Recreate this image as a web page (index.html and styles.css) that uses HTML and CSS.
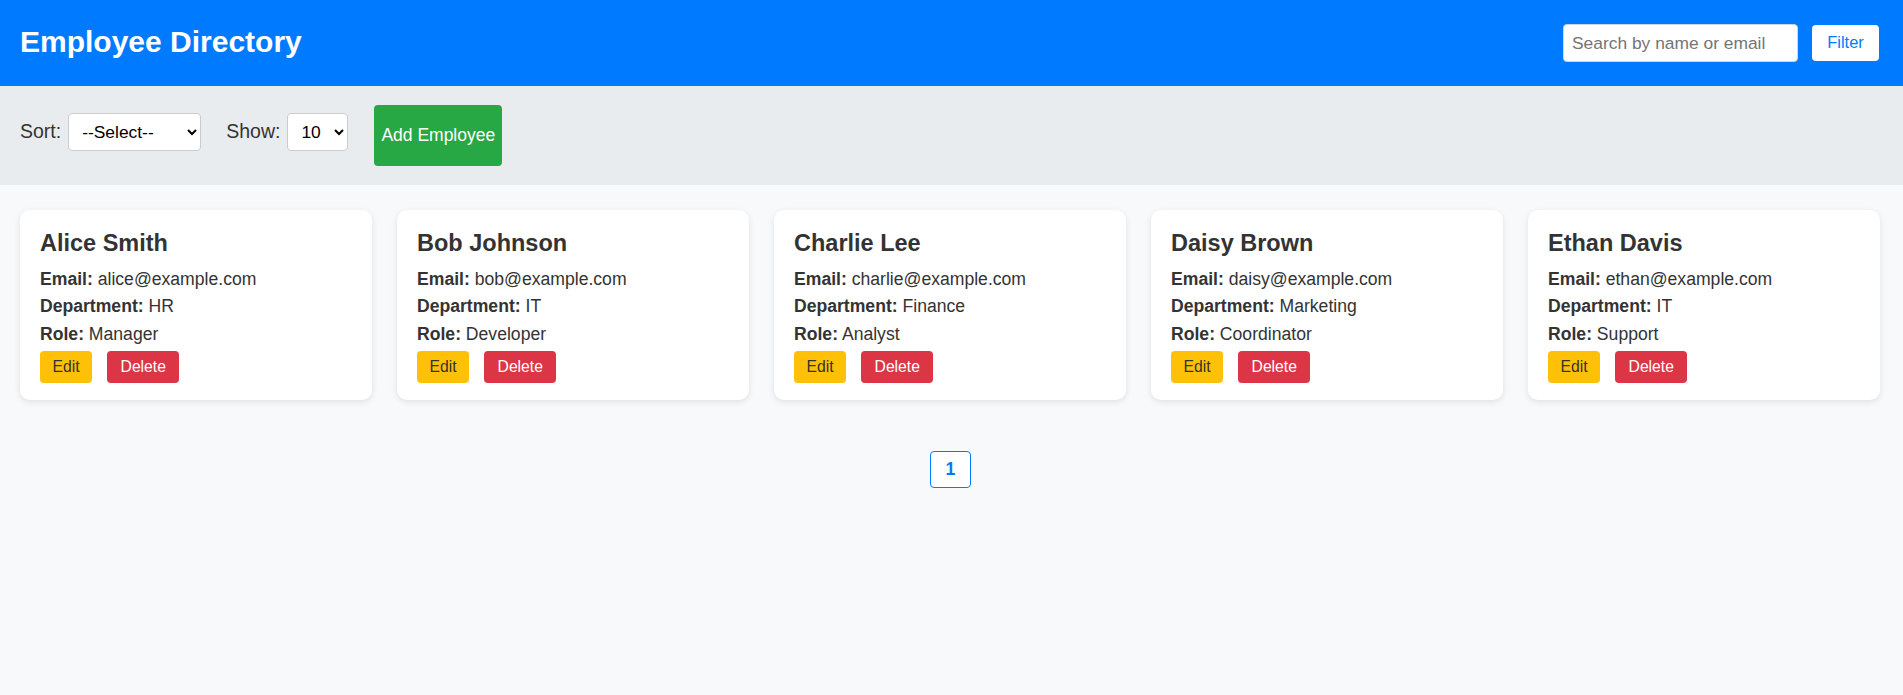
FILE: index.html
```html
<!DOCTYPE html>
<html lang="en">
<head>
<meta charset="utf-8">
<title>Employee Directory</title>
<link rel="stylesheet" href="styles.css">
</head>
<body>
<header class="topbar">
  <h1 class="brand">Employee Directory</h1>
  <div class="search">
    <input class="search-input" type="text" placeholder="Search by name or email">
    <button class="filter-btn">Filter</button>
  </div>
</header>

<section class="toolbar">
  <label class="field">Sort:
    <select class="sel sel-sort"><option>--Select--</option></select>
  </label>
  <label class="field">Show:
    <select class="sel sel-show"><option>10</option></select>
  </label>
  <button class="add-btn">Add Employee</button>
</section>

<main class="content">
  <div class="cards">
    <article class="card">
      <h3 class="name">Alice Smith</h3>
      <p class="row"><b>Email:</b> alice@example.com</p>
      <p class="row"><b>Department:</b> HR</p>
      <p class="row"><b>Role:</b> Manager</p>
      <div class="actions"><button class="btn-edit">Edit</button><button class="btn-del">Delete</button></div>
    </article>
    <article class="card">
      <h3 class="name">Bob Johnson</h3>
      <p class="row"><b>Email:</b> bob@example.com</p>
      <p class="row"><b>Department:</b> IT</p>
      <p class="row"><b>Role:</b> Developer</p>
      <div class="actions"><button class="btn-edit">Edit</button><button class="btn-del">Delete</button></div>
    </article>
    <article class="card">
      <h3 class="name">Charlie Lee</h3>
      <p class="row"><b>Email:</b> charlie@example.com</p>
      <p class="row"><b>Department:</b> Finance</p>
      <p class="row"><b>Role:</b> Analyst</p>
      <div class="actions"><button class="btn-edit">Edit</button><button class="btn-del">Delete</button></div>
    </article>
    <article class="card">
      <h3 class="name">Daisy Brown</h3>
      <p class="row"><b>Email:</b> daisy@example.com</p>
      <p class="row"><b>Department:</b> Marketing</p>
      <p class="row"><b>Role:</b> Coordinator</p>
      <div class="actions"><button class="btn-edit">Edit</button><button class="btn-del">Delete</button></div>
    </article>
    <article class="card">
      <h3 class="name">Ethan Davis</h3>
      <p class="row"><b>Email:</b> ethan@example.com</p>
      <p class="row"><b>Department:</b> IT</p>
      <p class="row"><b>Role:</b> Support</p>
      <div class="actions"><button class="btn-edit">Edit</button><button class="btn-del">Delete</button></div>
    </article>
  </div>
  <nav class="pager"><button class="page-btn">1</button></nav>
</main>
</body>
</html>
```
FILE: styles.css
```css
* { box-sizing: border-box; }
html, body {
  margin: 0;
  padding: 0;
}
body {
  font-family: "Liberation Sans", Arial, sans-serif;
  font-size: 17.6px;
  color: #333;
  background: #f8f9fa;
  min-height: 695px;
}
.topbar {
  background: #007bff;
  height: 86px;
  display: flex;
  align-items: center;
  justify-content: space-between;
  padding: 0 24px 0 20px;
}
.brand {
  margin: 0;
  color: #fff;
  font-size: 30px;
  font-weight: bold;
  line-height: 34px;
  position: relative;
  top: -1px;
}
.search {
  display: flex;
  align-items: center;
  gap: 14px;
}
.search-input {
  width: 235px;
  height: 38px;
  border: 1px solid #ced4da;
  border-radius: 4px;
  padding: 0 8px;
  font-family: "Liberation Sans", Arial, sans-serif;
  font-size: 17.4px;
  color: #333;
  background: #fff;
  outline: none;
}
.search-input::placeholder { color: #757575; }
.filter-btn {
  width: 67px;
  height: 36px;
  border: none;
  border-radius: 4px;
  background: #fff;
  color: #007bff;
  font-family: "Liberation Sans", Arial, sans-serif;
  font-size: 16.5px;
  padding: 0 0 2px;
}
.toolbar {
  background: #e9ecef;
  height: 99px;
  display: flex;
  align-items: center;
  gap: 25px;
  padding: 0 20px;
}
.field {
  display: flex;
  align-items: baseline;
  gap: 7px;
  color: #333;
  font-size: 19.5px;
  line-height: 22px;
  margin-bottom: 7px;
}
.sel {
  height: 38px;
  border: 1px solid #ccc;
  border-radius: 4px;
  background: #fff;
  color: #000;
  font-family: "Liberation Sans", Arial, sans-serif;
  font-size: 17.4px;
  padding: 0 4px 0 9px;
}
.sel-sort { width: 133px; }
.sel-show { width: 61px; }
.add-btn {
  height: 61px;
  padding: 0 7px;
  border: none;
  border-radius: 4px;
  background: #28a745;
  color: #fff;
  font-family: "Liberation Sans", Arial, sans-serif;
  font-size: 17.5px;
  margin-left: 1px;
}
.content {
  padding: 25px 23px 0 20px;
}
.cards {
  display: grid;
  grid-template-columns: repeat(5, 352px);
  gap: 25px;
}
.card {
  background: #fff;
  border-radius: 10px;
  box-shadow: 0 2px 6px rgba(0, 0, 0, 0.1);
  padding: 20px 20px 18px;
  height: 190px;
}
.name {
  margin: 0 0 12px;
  font-size: 23.5px;
  line-height: 27px;
  font-weight: bold;
  color: #333;
}
.row {
  margin: 0 0 7px;
  line-height: 20.3px;
  font-size: 17.6px;
}
.actions {
  display: flex;
  gap: 15px;
  margin-top: 6px;
}
.btn-edit, .btn-del {
  height: 32px;
  padding: 0 12.5px;
  border: none;
  border-radius: 4px;
  font-family: "Liberation Sans", Arial, sans-serif;
  font-size: 15.7px;
}
.btn-edit { background: #ffc107; color: #333; }
.btn-del { background: #dc3545; color: #fff; padding: 0 13.5px; }
.pager {
  display: flex;
  justify-content: center;
  margin-top: 51px;
  padding-left: 1px;
}
.page-btn {
  width: 41px;
  height: 37px;
  border: 1px solid #007bff;
  border-radius: 4px;
  background: #fff;
  color: #007bff;
  font-family: "Liberation Sans", Arial, sans-serif;
  font-weight: bold;
  font-size: 17.6px;
  padding: 0;
}
```
